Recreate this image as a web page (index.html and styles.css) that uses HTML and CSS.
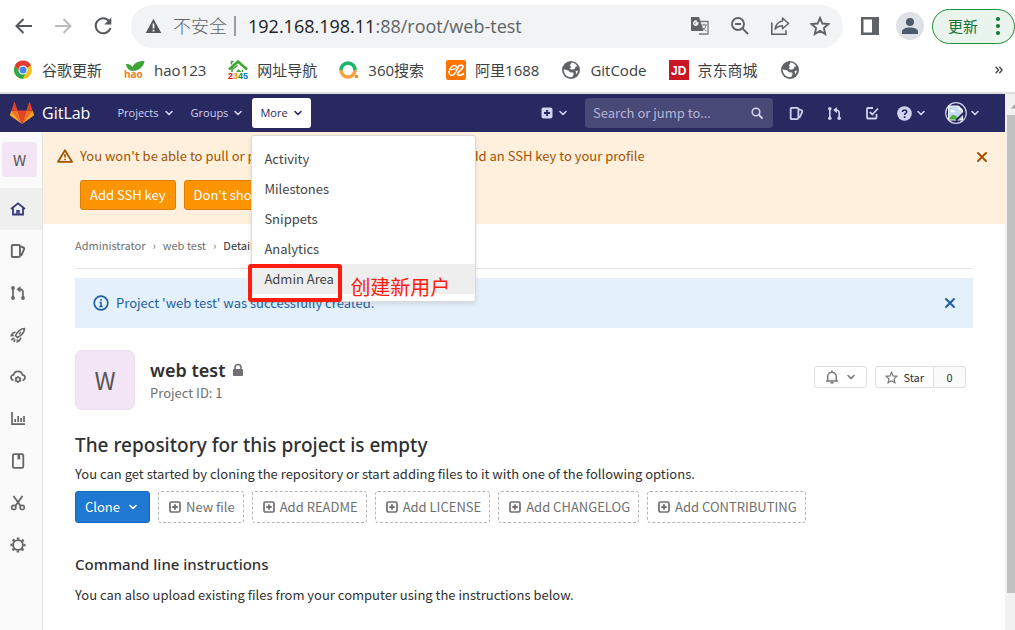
FILE: index.html
```
<!DOCTYPE html>
<html lang="en">
<head>
<meta charset="utf-8">
<meta name="viewport" content="width=device-width, initial-scale=1">
<title>web test · GitLab</title>
<link rel="stylesheet" href="styles.css">
</head>
<body>
<svg class="symbols" aria-hidden="true">
  <symbol id="chevron" viewBox="0 0 10 10"><path d="M2 3.500 5 6.500l3-3" fill="none" stroke="currentColor" stroke-width="1.600" stroke-linecap="round" stroke-linejoin="round"/></symbol>
  <symbol id="close" viewBox="0 0 12 12"><path d="M2 2l8 8M10 2l-8 8" fill="none" stroke="currentColor" stroke-width="2" stroke-linecap="round"/></symbol>
  <symbol id="issues" viewBox="0 0 16 16"><path d="M2.500 2h6a1.500 1.500 0 0 1 1.500 1.500v9A1.500 1.500 0 0 1 8.500 14h-6A1 1 0 0 1 1.800 13V3a1 1 0 0 1 .7-1zM10 3.200l3.300 1.300c.8.3 1.100 1 .8 1.700L11.500 12l-1.500.5" fill="none" stroke="currentColor" stroke-width="1.900" stroke-linejoin="round"/></symbol>
  <symbol id="merge" viewBox="0 0 16 16"><path d="M3 3.500v9M8 4.200h1.500c2.300 0 3.500 1 3.500 3.300v5" fill="none" stroke="currentColor" stroke-width="1.700"/><path d="M10.500 1v6.400L6.500 4.200z" fill="currentColor"/><circle cx="3" cy="3" r="1.900" fill="currentColor"/><circle cx="3" cy="13" r="1.900" fill="currentColor"/><circle cx="13" cy="13" r="1.900" fill="currentColor"/></symbol>
  <symbol id="plus-square" viewBox="0 0 14 14"><rect x="2" y="2" width="10" height="10" rx="1.500" fill="none" stroke="currentColor" stroke-width="1.700"/><path d="M7 4.300v5.400M4.300 7h5.400" stroke="currentColor" stroke-width="1.800"/></symbol>
  <symbol id="globe" viewBox="0 0 20 20"><circle cx="10" cy="10" r="9" fill="#5f6368"/><path d="M10.500 2.600c2.600.2 4.600 1.500 5.700 3.700l-1.700.4-.8 2.300-3.300.7-1.800-1.500 1.600-1.200-1.500-1.300 1-1.400zM2.700 9.300l4.600 1.200 1.800 1.700 2.700.2 1 1.700-1.600 3c-4.300.9-8.500-2.500-8.500-7.800zM14.500 11.300l2.500-.8c-.2 1.500-.8 2.800-1.700 3.800z" fill="#fff"/></symbol>
  <symbol id="star" viewBox="0 0 18 18"><path d="M9 1.800l2.200 5 5.300.5-4 3.600 1.200 5.300L9 13.400l-4.700 2.800 1.200-5.300-4-3.600 5.300-.5z" fill="none" stroke="currentColor" stroke-width="1.700" stroke-linejoin="miter"/></symbol>
</svg>

<header class="browser">
  <div class="toolbar">
    <div class="tool-nav">
      <button class="tool" aria-label="Back"><svg width="20" height="20" viewBox="0 0 20 20"><path d="M19 10H4M10.500 3L3.500 10l7 7" fill="none" stroke="#54575b" stroke-width="2"/></svg></button>
      <button class="tool" aria-label="Forward"><svg width="20" height="20" viewBox="0 0 20 20"><path d="M2 10h15M10.500 3l7 7-7 7" fill="none" stroke="#b9bbbd" stroke-width="2"/></svg></button>
      <button class="tool" aria-label="Reload"><svg width="20" height="20" viewBox="0 0 20 20"><path d="M16.200 5.300A7.500 7.500 0 1 0 17.400 12" fill="none" stroke="#54575b" stroke-width="2"/><path d="M18.300 1.500v7h-7z" fill="#54575b"/></svg></button>
    </div>
    <div class="address">
      <svg width="17" height="16" viewBox="0 0 17 16"><path d="M8.500.8 16.300 15H.7z" fill="#54575b"/><path d="M8.500 5.500v5M8.500 11.700v1.800" stroke="#fff" stroke-width="1.700"/></svg>
      <span class="insecure">不安全</span>
      <span class="url"><b>192.168.198.11</b>:88/root/web-test</span>
      <div class="address-tools">
        <button class="tool" aria-label="Translate"><svg width="20" height="20" viewBox="0 0 20 20"><path d="M8 5.500h10v12.500H9" fill="#f8f8f8" stroke="#777a7e" stroke-width="1.300"/><path d="M1 1h8l4.500 14H2a1 1 0 0 1-1-1z" fill="#5f6368"/><path d="M8.500 7H6v1.500h1.200A2 2 0 1 1 7 5.600" fill="none" stroke="#fff" stroke-width="1.300"/><path d="M11 9h6M14 7.500V9M16 9c-.5 2.500-2 4.500-4 6M12 10.500c1 2 2.500 3.500 4.500 4.500" fill="none" stroke="#777a7e"/></svg></button>
        <button class="tool" aria-label="Zoom"><svg width="20" height="20" viewBox="0 0 20 20"><circle cx="8" cy="8" r="6" fill="none" stroke="#5f6368" stroke-width="1.900"/><path d="M12.400 12.400l5.600 5.600M5 8h6" stroke="#5f6368" stroke-width="2"/></svg></button>
        <button class="tool" aria-label="Share"><svg width="20" height="20" viewBox="0 0 20 20"><path d="M1.800 6.500v11.700H16v-4" fill="none" stroke="#5f6368" stroke-width="1.600"/><path d="M12.500 2 18.500 7.500l-6 5.300V9.800c-3.300 0-5.500 1-7.300 3.300.6-4.300 3-7.300 7.300-8z" fill="none" stroke="#5f6368" stroke-width="1.500" stroke-linejoin="round"/></svg></button>
        <button class="tool" aria-label="Bookmark"><svg class="grey" width="20" height="20"><use href="#star"/></svg></button>
      </div>
    </div>
    <button class="tool" aria-label="Side panel"><svg width="18" height="18" viewBox="0 0 18 18"><path d="M0 0h18v18H0z" fill="#5f6368"/><path d="M2.500 2.500h8.500v13H2.500z" fill="#fff"/></svg></button>
    <button class="tool profile" aria-label="Profile"><svg width="18" height="18" viewBox="0 0 18 18"><circle cx="9" cy="5" r="4" fill="#4d5a6c"/><path d="M1 17v-2.500C1 12 5 10.500 9 10.500s8 1.500 8 4V17z" fill="#4d5a6c"/></svg></button>
    <button class="update">更新<svg width="4" height="18" viewBox="0 0 4 18"><g fill="#137333"><circle cx="2" cy="2" r="2"/><circle cx="2" cy="9" r="2"/><circle cx="2" cy="16" r="2"/></g></svg></button>
  </div>
  <nav class="bookmarks" aria-label="Bookmarks">
    <a href="#"><svg width="20" height="20" viewBox="0 0 20 20"><circle cx="10" cy="10" r="9" fill="#fbc116"/><path d="M10 10 2.200 5.500A9 9 0 0 1 17.800 5.500z" fill="#e33b2e"/><path d="M2.200 5.500A9 9 0 0 0 9.500 19L13.500 12 6 12z" fill="#2da94f"/><path d="M10 5.500h8a9 9 0 0 0-16-.3l4 6.300z" fill="#e33b2e"/><circle cx="10" cy="10" r="4.500" fill="#fff"/><circle cx="10" cy="10" r="3.500" fill="#4285f4"/></svg>谷歌更新</a>
    <a href="#"><svg width="21" height="20" viewBox="0 0 21 20"><path d="M2 4c3-.5 5.500 1 6.500 3C10 3 14.500.7 20.500 1 20 6.500 15 11 8.500 11 5 11 2.500 8 2 4z" fill="#3fa535"/><text x="0" y="18" class="hao">hao</text></svg>hao123</a>
    <a href="#"><svg width="20" height="20" viewBox="0 0 20 20"><path d="M1 9.500 10 1.500l9 8" fill="none" stroke="#3fa535" stroke-width="2.600"/><path d="M4 12V9.500l5.500-4M14.500 10v2M3.500 4.500V1.500h2" fill="none" stroke="#3fa535" stroke-width="1.500"/><path d="M8 12l2.500-3 3 3z" fill="#3fa535"/><text x="0" y="19" class="n2345"><tspan fill="#e60012">2</tspan><tspan fill="#f39800">3</tspan><tspan fill="#178a38">4</tspan><tspan fill="#0878d0">5</tspan></text></svg>网址导航</a>
    <a href="#"><svg width="20" height="20" viewBox="0 0 20 20"><path d="M2 10a7 7 0 0 1 14 0" fill="none" stroke="#19b66b" stroke-width="3.500"/><path d="M2 10a7 7 0 0 0 14 0" fill="none" stroke="#f9a03c" stroke-width="3.500"/><circle cx="17.500" cy="16.500" r="1.800" fill="#f98c1c"/></svg>360搜索</a>
    <a href="#"><svg width="20" height="20" viewBox="0 0 20 20"><rect width="20" height="20" rx="2" fill="#ff7300"/><path d="M4 9.500C7.500 10 11 8.500 10.500 6.500S6 5.500 4 9s-.5 7 2.500 6.300 3.500-4.800 6-7.800" fill="none" stroke="#fff" stroke-width="1.400"/><path d="M11.500 7.500c2-3 6-3 5.500-.5s-5.500 5-5.500 7 4 1.500 6.500-.5" fill="none" stroke="#fff" stroke-width="1.700"/></svg>阿里1688</a>
    <a href="#"><svg width="20" height="20"><use href="#globe"/></svg>GitCode</a>
    <a href="#"><svg width="20" height="20" viewBox="0 0 20 20"><path d="M0 0h20v20H0z" fill="#c81623"/><text x="2" y="15" class="jd">JD</text></svg>京东商城</a>
    <a href="#" aria-label="Bookmark"><svg width="20" height="20"><use href="#globe"/></svg></a>
    <button class="tool overflow" aria-label="More bookmarks"><svg width="8" height="8" viewBox="0 0 8 8"><path d="M.7.8 3.500 4 .7 7.200M4.300.8 7.100 4 4.300 7.200" fill="none" stroke="#44474b" stroke-width="1.400"/></svg></button>
  </nav>
</header>

<div class="viewport">
  <div class="page">
    <header class="navbar">
      <a class="brand" href="#"><svg width="24" height="22" viewBox="0 0 24 22"><path d="M12 22 7.600 8.500h8.800z" fill="#e24329"/><path d="M12 22 7.600 8.500H1.400zM12 22l4.400-13.500h6.200z" fill="#fc6d26"/><path d="M1.400 8.500 0 12.600c-.1.400 0 .8.400 1.100L12 22zM22.600 8.500l1.400 4.100c.1.400 0 .8-.4 1.100L12 22z" fill="#fca326"/><path d="M1.400 8.500h6.200L4.900.4c-.1-.4-.7-.4-.8 0zM22.600 8.500h-6.200L19.100.4c.1-.4.7-.4.8 0z" fill="#e24329"/></svg>GitLab</a>
      <div class="menus">
        <button class="menu">Projects <svg width="10" height="10"><use href="#chevron"/></svg></button>
        <button class="menu">Groups <svg width="10" height="10"><use href="#chevron"/></svg></button>
        <div class="more">
          <button class="menu open" aria-expanded="true">More <svg width="10" height="10"><use href="#chevron"/></svg></button>
          <div class="dropdown">
            <a href="#">Activity</a>
            <a href="#">Milestones</a>
            <a href="#">Snippets</a>
            <a href="#">Analytics</a>
            <a href="#" class="active">Admin Area</a>
            <span class="mark"></span>
            <span class="note">创建新用户</span>
          </div>
        </div>
      </div>
      <button class="icon-btn create" aria-label="Create new"><svg width="12" height="12" viewBox="0 0 12 12"><rect x=".5" y=".5" width="11" height="11" rx="2" fill="currentColor"/><path d="M6 3v6M3 6h6" stroke="#292961" stroke-width="1.800"/></svg><svg width="10" height="10"><use href="#chevron"/></svg></button>
      <label class="search"><input type="text" placeholder="Search or jump to..." aria-label="Search or jump to"><svg width="12" height="12" viewBox="0 0 12 12"><circle cx="5" cy="5" r="3.800" fill="none" stroke="currentColor" stroke-width="1.600"/><path d="M8 8l3 3" stroke="currentColor" stroke-width="1.800" stroke-linecap="round"/></svg></label>
      <div class="shortcuts">
        <button class="icon-btn" aria-label="Issues"><svg width="15" height="15"><use href="#issues"/></svg></button>
        <button class="icon-btn" aria-label="Merge requests"><svg width="15" height="15"><use href="#merge"/></svg></button>
        <button class="icon-btn" aria-label="To-dos"><svg width="14" height="14" viewBox="0 0 14 14"><path d="M8 2H3a1 1 0 0 0-1 1v8.500a1 1 0 0 0 1 1h7.500a1 1 0 0 0 1-1V8M4.800 6l2.500 2.500L13 2.500" fill="none" stroke="currentColor" stroke-width="1.800"/></svg></button>
      </div>
      <button class="icon-btn help" aria-label="Help"><svg width="15" height="15" viewBox="0 0 15 15"><circle cx="7.500" cy="7.500" r="7.300" fill="currentColor"/><path d="M5.500 6c0-2.700 4.200-2.500 4.200-.2 0 1.500-2.100 1.500-2.100 3.100M7.600 10.300v1.600" fill="none" stroke="#292961" stroke-width="1.600"/></svg><svg width="10" height="10"><use href="#chevron"/></svg></button>
      <button class="icon-btn user" aria-label="Account"><svg width="22" height="22" viewBox="0 0 22 22"><circle cx="11" cy="11" r="10.300" fill="#292961" stroke="#d1d1f0" stroke-width="1.200"/><path d="M3.500 4h10l4 4v10h-14z" fill="#c5d9f7" stroke="#f5f5f5"/><path d="M4 17.500c2-5 5-6 8-2.500l1.500 2.500z" fill="#4caf3a"/><path d="M5.500 9.500c0-2 3-2.500 3.500-.8 1.500-.3 2 1.300.8 1.500H6z" fill="#fff"/><path d="M13.500 4v4h4z" fill="#fff"/><path d="M11 18.500 18.500 11" stroke="#292961" stroke-width="2"/></svg><svg width="10" height="10"><use href="#chevron"/></svg></button>
    </header>

    <div class="body">
      <aside class="sidebar">
        <a class="side-avatar" href="#">W</a>
        <a class="side-item current" href="#" aria-label="Project overview"><svg width="16" height="16" viewBox="0 0 16 16"><path d="M1 8 8 2.300 15 8M3 7v6.500h10V7" fill="none" stroke="currentColor" stroke-width="1.800"/><path d="M7 13V9.800h2V13" fill="none" stroke="currentColor" stroke-width="1.500"/></svg></a>
        <a class="side-item" href="#" aria-label="Issues"><svg width="16" height="16"><use href="#issues"/></svg></a>
        <a class="side-item" href="#" aria-label="Merge requests"><svg width="16" height="16"><use href="#merge"/></svg></a>
        <a class="side-item" href="#" aria-label="CI / CD"><svg width="16" height="16" viewBox="0 0 16 16"><path d="M14.500 1.500C11 1.500 7.500 4.500 5.500 8.700l1.800 1.800C11.500 8.500 14.500 5 14.500 1.500z" fill="none" stroke="currentColor" stroke-width="1.600" stroke-linejoin="round"/><path d="M5.500 5.300C3.700 5.300 2 6.700 1.200 8.700l2.600-.2M10.700 10.500c0 1.800-1.400 3.500-3.400 4.300l.2-2.600M4.300 11l-3 2M5.200 12.500l-1.500 2.300" fill="none" stroke="currentColor" stroke-width="1.600"/><path d="M9 7l2-2" stroke="currentColor" stroke-width="1.500"/></svg></a>
        <a class="side-item" href="#" aria-label="Operations"><svg width="16" height="16" viewBox="0 0 16 16"><path d="M3.500 11.300C1.800 11 1 9.800 1 8.600c0-1.500 1.200-2.500 2.500-2.700C4 3.800 5.800 2.300 8 2.300s4 1.500 4.500 3.600c1.400.2 2.500 1.200 2.500 2.700 0 1.200-.8 2.400-2.500 2.700" fill="none" stroke="currentColor" stroke-width="1.700"/><circle cx="8" cy="10.500" r="2" fill="none" stroke="currentColor" stroke-width="1.600"/><path d="M8 7v1.500M8 12.500V14M5 8.800l1.300.7M9.700 11.500l1.300.7M11 8.800l-1.300.7M6.300 11.500l-1.300.7" stroke="currentColor" stroke-width="1.500"/></svg></a>
        <a class="side-item" href="#" aria-label="Analytics"><svg width="16" height="16" viewBox="0 0 16 16"><path d="M2 1v12.200h13" fill="none" stroke="currentColor" stroke-width="1.700"/><path d="M5.200 8v3M8.200 5v6M11.200 7v4M14 5v6" stroke="currentColor" stroke-width="1.700"/></svg></a>
        <a class="side-item" href="#" aria-label="Wiki"><svg width="16" height="16" viewBox="0 0 16 16"><rect x="2.900" y="1.200" width="10.400" height="13.600" rx="1.300" fill="none" stroke="currentColor" stroke-width="1.800"/><path d="M7.500 1v6l1.300-1 1.400 1V1" fill="currentColor"/></svg></a>
        <a class="side-item" href="#" aria-label="Snippets"><svg width="16" height="16" viewBox="0 0 16 16"><path d="M3.500 1l7 9.700M12.500 1l-7 9.700" stroke="currentColor" stroke-width="1.800"/><circle cx="3.800" cy="12.500" r="2.100" fill="none" stroke="currentColor" stroke-width="1.700"/><circle cx="12.200" cy="12.500" r="2.100" fill="none" stroke="currentColor" stroke-width="1.700"/></svg></a>
        <a class="side-item" href="#" aria-label="Settings"><svg width="16" height="16" viewBox="0 0 16 16"><circle cx="8" cy="8" r="4.900" fill="none" stroke="currentColor" stroke-width="1.900"/><circle cx="8" cy="8" r="6.600" fill="none" stroke="currentColor" stroke-width="2" stroke-dasharray="2.600 2.584" stroke-dashoffset="1.300"/></svg></a>
      </aside>

      <main class="main">
        <section class="warning">
          <svg class="warning-icon" width="16" height="14" viewBox="0 0 16 14"><path d="M8 1.300 15 12.800H1z" fill="none" stroke="currentColor" stroke-width="1.800" stroke-linejoin="round"/><path d="M8 5v3.500M8 9.700v1.500" stroke="currentColor" stroke-width="1.600"/></svg>
          <div class="warning-body">
            <p>You won't be able to pull or push project code via SSH until you add an SSH key to your profile</p>
            <div class="warning-actions">
              <a href="#" class="btn-warn">Add SSH key</a>
              <a href="#" class="btn-warn">Don't show again</a>
            </div>
          </div>
          <button class="tool" aria-label="Dismiss"><svg width="12" height="12"><use href="#close"/></svg></button>
        </section>

        <div class="content">
          <nav class="crumbs" aria-label="Breadcrumb">
            <a href="#">Administrator</a><span>›</span><a href="#">web test</a><span>›</span><a href="#" class="here">Details</a>
          </nav>
          <div class="flash">
            <svg width="16" height="16" viewBox="0 0 16 16"><circle cx="8" cy="8" r="6.800" fill="none" stroke="currentColor" stroke-width="1.700"/><path d="M8 4v1.700M6.500 7.500H8V11.500M6.300 11.500h3.400" fill="none" stroke="currentColor" stroke-width="1.500"/></svg>
            <p>Project 'web test' was successfully created.</p>
            <button class="tool" aria-label="Dismiss"><svg width="12" height="12"><use href="#close"/></svg></button>
          </div>

          <section class="project">
            <div class="avatar">W</div>
            <div class="project-info">
              <h1>web test <svg width="12" height="14" viewBox="0 0 12 14"><rect x="1" y="6" width="10" height="7" rx="1" fill="#707070"/><path d="M3 6.500V4.500a3 3 0 0 1 6 0v2" fill="none" stroke="#707070" stroke-width="1.600"/></svg></h1>
              <p>Project ID: 1</p>
            </div>
            <div class="project-actions">
              <button class="btn-small" aria-label="Notifications"><svg width="14" height="14" viewBox="0 0 14 14"><path d="M1 11h12M2.700 11V6.500a4.300 4.300 0 0 1 8.600 0V11M7 .5v2" fill="none" stroke="currentColor" stroke-width="1.500"/><path d="M5.300 12h3.400v1.500H5.300z" fill="currentColor"/></svg><svg width="10" height="10"><use href="#chevron"/></svg></button>
              <div class="star-group">
                <button class="btn-small"><svg width="13" height="13"><use href="#star"/></svg>Star</button>
                <a href="#" class="count">0</a>
              </div>
            </div>
          </section>

          <h2>The repository for this project is empty</h2>
          <p class="lead">You can get started by cloning the repository or start adding files to it with one of the following options.</p>
          <div class="actions">
            <button class="clone">Clone <svg width="10" height="10"><use href="#chevron"/></svg></button>
            <a href="#" class="add"><svg width="14" height="14"><use href="#plus-square"/></svg>New file</a>
            <a href="#" class="add"><svg width="14" height="14"><use href="#plus-square"/></svg>Add README</a>
            <a href="#" class="add"><svg width="14" height="14"><use href="#plus-square"/></svg>Add LICENSE</a>
            <a href="#" class="add"><svg width="14" height="14"><use href="#plus-square"/></svg>Add CHANGELOG</a>
            <a href="#" class="add"><svg width="14" height="14"><use href="#plus-square"/></svg>Add CONTRIBUTING</a>
          </div>
          <h3>Command line instructions</h3>
          <p>You can also upload existing files from your computer using the instructions below.</p>
        </div>
      </main>
    </div>
  </div>
  <div class="scrollbar" aria-hidden="true"><svg width="8" height="21" viewBox="0 0 8 21"><path d="M4 14.500 8.500 9.500 13 14.500z" fill="#a3a3a3"/></svg><div class="thumb"></div></div>
</div>
</body>
</html>
```
FILE: styles.css
```
* { box-sizing: border-box; }
body {
  margin: 0;
  height: 100vh;
  overflow: hidden;
  display: flex;
  flex-direction: column;
  background: #fff;
  color: #303030;
  font: 13px/20px "Noto Sans CJK SC", "Open Sans", sans-serif;
}
a { color: inherit; text-decoration: none; }
p, h1, h2, h3 { margin: 0; }
h1, h2, h3 { font-family: "Noto Sans", "Open Sans", sans-serif; }
button { font: inherit; color: inherit; cursor: pointer; }
svg { display: block; flex: none; }
.symbols { position: absolute; width: 0; height: 0; }

/* Browser chrome */
.browser {
  flex: none;
  border-bottom: 2px solid #dcdddf;
  font-family: "Open Sans", "Noto Sans CJK SC", sans-serif;
}
.tool { display: flex; padding: 0; border: 0; background: none; }
.toolbar { display: flex; align-items: center; height: 52px; padding-left: 13px; }
.tool-nav { display: flex; gap: 20px; margin-right: 18px; }
.address {
  flex: 1;
  display: flex;
  align-items: center;
  height: 43px;
  margin-right: 18px;
  padding: 0 13px 0 14px;
  border-radius: 22px;
  background: #f1f3f4;
  color: #5f6368;
}
.insecure {
  margin-left: 11px;
  padding-right: 7px;
  border-right: 2px solid #9a9da1;
  font-size: 18px;
  font-weight: 300;
}
.url { margin-left: 12px; font-size: 18px; white-space: nowrap; }
.url b { font-weight: 400; color: #202124; }
.address-tools { display: flex; gap: 20px; margin-left: auto; }
.grey { color: #5f6368; }
.profile {
  align-items: center;
  justify-content: center;
  width: 28px;
  height: 28px;
  margin: 0 8px 0 17px;
  border-radius: 50%;
  background: #dee1e6;
}
.update {
  display: flex;
  align-items: center;
  gap: 18px;
  height: 35px;
  padding: 0 14px 0 15px;
  border: 1px solid #1e8e3e;
  border-radius: 18px;
  background: #e9f4ec;
  color: #137333;
  font-size: 15px;
}
.bookmarks {
  display: flex;
  align-items: center;
  gap: 22px;
  height: 40px;
  padding: 0 12px 4px 13px;
  color: #3c4043;
  font-size: 15px;
}
.bookmarks a { display: flex; align-items: center; gap: 9px; white-space: nowrap; }
.overflow { margin-left: auto; }
.hao { font: 700 10px "Open Sans", sans-serif; fill: #f08022; }
.n2345 { font: 700 9px "Liberation Sans", sans-serif; }
.jd { font: 700 12px "Liberation Sans", sans-serif; fill: #fff; }

/* Page */
.viewport { flex: 1; display: flex; min-height: 0; }
.page { flex: 1; min-width: 0; display: flex; flex-direction: column; }
.scrollbar { display: flex; flex-direction: column; width: 10px; padding: 0 0 37px 2px; background: #f1f1f1; }
.thumb { flex: 1; background: #c1c1c1; }

.navbar {
  flex: none;
  display: flex;
  align-items: center;
  height: 38px;
  padding: 0 25px 0 10px;
  background: #292961;
  color: #d1d1f0;
}
.brand {
  display: flex;
  align-items: center;
  gap: 8px;
  margin-right: 19px;
  font-family: "Open Sans", sans-serif;
  font-size: 16px;
  color: #fff;
}
.menus { display: flex; gap: 1px; margin-right: auto; }
.menu {
  display: flex;
  align-items: center;
  gap: 5px;
  height: 30px;
  padding: 0 8px;
  border: 0;
  border-radius: 3px;
  background: none;
  font-size: 11px;
  font-family: "Open Sans", sans-serif;
}
.menu.open { background: #fff; color: #292961; }
.more { position: relative; }
.dropdown {
  position: absolute;
  z-index: 2;
  top: 37px;
  left: -1px;
  width: 225px;
  padding: 8px 0 7px;
  border: 1px solid #dbdbdb;
  border-radius: 3px;
  background: #fff;
  box-shadow: 0 2px 4px rgba(0, 0, 0, .1);
  color: #444;
}
.dropdown a { display: block; padding: 5px 12px; }
.dropdown .active { background: #eee; }
.mark {
  position: absolute;
  left: -4px;
  bottom: -1px;
  width: 94px;
  height: 38px;
  border: 4px solid #fc1d0e;
  border-radius: 3px;
}
.note { position: absolute; left: 98px; bottom: 2px; font-size: 20px; line-height: 24px; color: #fc1d0e; white-space: nowrap; }
.icon-btn { display: flex; align-items: center; padding: 0; border: 0; background: none; }
.create { gap: 5px; margin-right: 17px; }
.search {
  display: flex;
  align-items: center;
  width: 188px;
  height: 30px;
  padding: 0 10px 0 8px;
  border-radius: 4px;
  background: #494978;
}
.search input {
  flex: 1;
  min-width: 0;
  padding: 0;
  border: 0;
  outline: 0;
  background: none;
  color: inherit;
  font: inherit;
}
.search input::placeholder { color: #b5b5d8; opacity: 1; }
.shortcuts { display: flex; gap: 23px; margin: 0 18px 0 16px; }
.help { gap: 4px; }
.user { gap: 3px; margin-left: 19px; }

.body { flex: 1; min-height: 0; display: flex; }
.sidebar {
  flex: none;
  width: 43px;
  border-right: 1px solid #e3e3e3;
  background: #fafafa;
  color: #666;
}
.side-avatar {
  display: flex;
  align-items: center;
  justify-content: center;
  width: 35px;
  height: 35px;
  margin: 10px 0 11px 2px;
  border-radius: 4px;
  background: #f3e5f5;
  color: #555;
  font-size: 15px;
}
.side-item { display: flex; align-items: center; height: 42px; padding-left: 10px; }
.current { background: #efefef; color: #393982; }

.main { flex: 1; min-width: 0; }
.warning {
  display: flex;
  align-items: flex-start;
  height: 92px;
  padding: 14px 17px 0 14px;
  background: #fff0de;
  color: #a35200;
}
.warning-icon { margin-top: 3px; }
.warning-body { flex: 1; padding-left: 7px; white-space: nowrap; }
.warning .tool { margin-top: 5px; }
.warning-actions { display: flex; gap: 8px; margin-top: 14px; }
.btn-warn {
  padding: 4px 9px;
  border: 1px solid #de7e00;
  border-radius: 3px;
  background: #fc9403;
  color: #fff;
}
.content { padding: 0 32px; }
.crumbs {
  display: flex;
  gap: 7px;
  height: 45px;
  padding-top: 11px;
  border-bottom: 1px solid #e3e3e3;
  color: #707070;
  font-size: 11px;
}
.here { color: #303030; }
.flash {
  display: flex;
  align-items: center;
  gap: 7px;
  height: 50px;
  margin-top: 9px;
  padding: 0 17px 0 18px;
  background: #e4f0fb;
  color: #1f5fa3;
}
.flash .tool { margin-left: auto; }
.project { display: flex; align-items: center; margin: 22px 7px 0 0; }
.avatar {
  display: flex;
  align-items: center;
  justify-content: center;
  width: 60px;
  height: 60px;
  border: 1px solid #ece0ee;
  border-radius: 7px;
  background: #f3e5f5;
  color: #555;
  font-size: 24px;
}
.project-info { margin-left: 15px; }
.project-info h1 { display: flex; align-items: center; gap: 7px; font-size: 18px; line-height: 26px; font-weight: 600; }
.project-info p { color: #707070; }
.project-actions { display: flex; align-items: center; gap: 8px; margin: 0 0 6px auto; font-size: 11px; }
.btn-small {
  display: flex;
  align-items: center;
  gap: 5px;
  height: 22px;
  padding: 0 9px;
  border: 1px solid #dfdfdf;
  border-radius: 3px;
  background: #fff;
}
.btn-small svg { color: #777; }
.project-actions > .btn-small { gap: 7px; padding: 0 10px; }
.star-group { display: flex; }
.star-group .btn-small { border-radius: 3px 0 0 3px; }
.count {
  width: 32px;
  border: 1px solid #dfdfdf;
  border-left: 0;
  border-radius: 0 3px 3px 0;
  background: #fafafa;
  text-align: center;
}
.content h2 { margin-top: 21px; font-size: 19px; line-height: 28px; font-weight: 500; }
.lead { margin-top: 5px; }
.actions { display: flex; gap: 8px; margin-top: 7px; }
.clone {
  display: flex;
  align-items: center;
  gap: 8px;
  height: 32px;
  padding: 0 11px 0 9px;
  border: 1px solid #1068bf;
  border-radius: 3px;
  background: #1f78d1;
  color: #fff;
}
.add {
  display: flex;
  align-items: center;
  gap: 4px;
  height: 32px;
  padding: 0 8px 0 9px;
  border: 1px dashed #b5b5b5;
  border-radius: 3px;
  color: #707070;
  white-space: nowrap;
}
.content h3 { margin-top: 30px; font-size: 15px; line-height: 22px; font-weight: 500; }
.content h3 + p { margin-top: 10px; }
```
